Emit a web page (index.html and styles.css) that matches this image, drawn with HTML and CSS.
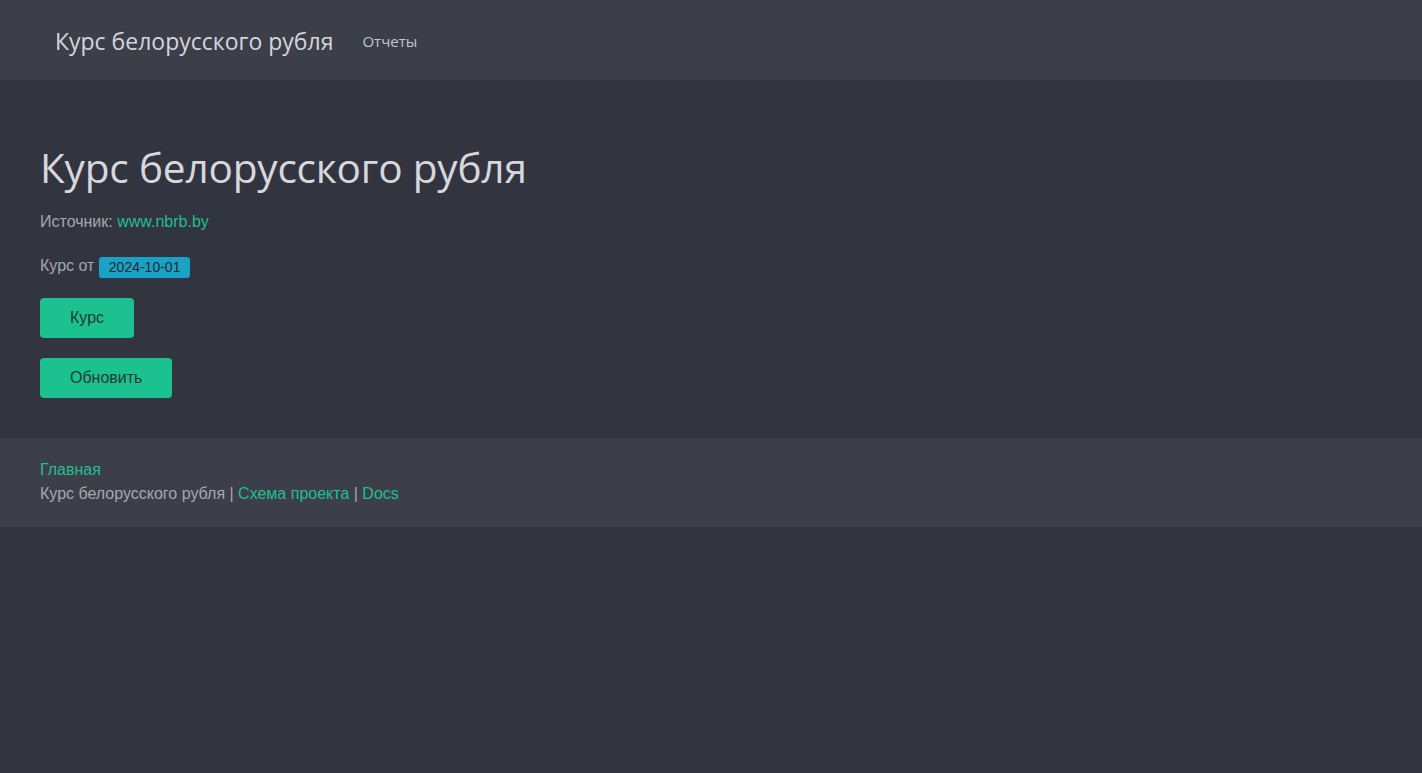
FILE: index.html
```html
<!DOCTYPE html>
<html lang="ru">
<head>
<meta charset="utf-8">
<title>Курс белорусского рубля</title>
<link rel="stylesheet" href="styles.css">
</head>
<body>
<nav class="navbar">
  <a class="brand" href="#">Курс белорусского рубля</a>
  <a class="nav-link" href="#">Отчеты</a>
</nav>
<main class="content">
  <h1 class="title">Курс белорусского рубля</h1>
  <p class="line">Источник: <a class="link" href="#">www.nbrb.by</a></p>
  <p class="line">Курс от <span class="badge">2024-10-01</span></p>
  <div class="actions">
    <button class="btn">Курс</button>
    <button class="btn">Обновить</button>
  </div>
</main>
<footer class="footer">
  <div><a class="link" href="#">Главная</a></div>
  <div>Курс белорусского рубля | <a class="link" href="#">Схема проекта</a> | <a class="link" href="#">Docs</a></div>
</footer>
</body>
</html>
```
FILE: styles.css
```css
html, body {
  margin: 0;
  padding: 0;
  background: #323440;
  min-height: 100%;
}
body {
  font-family: "Liberation Sans", Arial, sans-serif;
  font-size: 16px;
  color: #a5a8ae;
}
a { text-decoration: none; }
.navbar {
  display: flex;
  align-items: center;
  height: 80px;
  background: #3c3f49;
  padding: 0 0 0 55px;
}
.brand {
  font-family: "Open Sans", "Noto Sans", sans-serif;
  font-size: 23px;
  color: #d4d6da;
  margin-right: 29px;
  margin-top: 2px;
}
.nav-link {
  font-family: "Open Sans", "Noto Sans", sans-serif;
  font-size: 15px;
  color: #c4c6cb;
  margin-top: 1px;
}
.content {
  padding: 58px 40px 40px;
}
.title {
  font-family: "Open Sans", "Noto Sans", sans-serif;
  font-weight: 400;
  font-size: 40.6px;
  line-height: 60px;
  color: #d6d8dc;
  margin: 0 0 14px;
  letter-spacing: -0.2px;
}
.line {
  margin: 0 0 24px;
  line-height: 20px;
}
.link { color: #1fbf8f; }
.badge {
  display: inline-block;
  background: #1aa2c6;
  color: #1f2a33;
  font-size: 14px;
  line-height: 21px;
  padding: 0 10px;
  border-radius: 3px;
  vertical-align: -1px;
}
.actions {
  display: flex;
  flex-direction: column;
  align-items: flex-start;
  gap: 20px;
  margin-top: -4px;
}
.btn {
  font-family: "Liberation Sans", Arial, sans-serif;
  font-size: 16px;
  background: #1cc190;
  color: #1e3a30;
  border: none;
  border-radius: 4px;
  height: 40px;
  padding: 0 30px;
}
.footer {
  background: #3c3f49;
  padding: 20px 40px 21px;
  line-height: 24px;
}
```
